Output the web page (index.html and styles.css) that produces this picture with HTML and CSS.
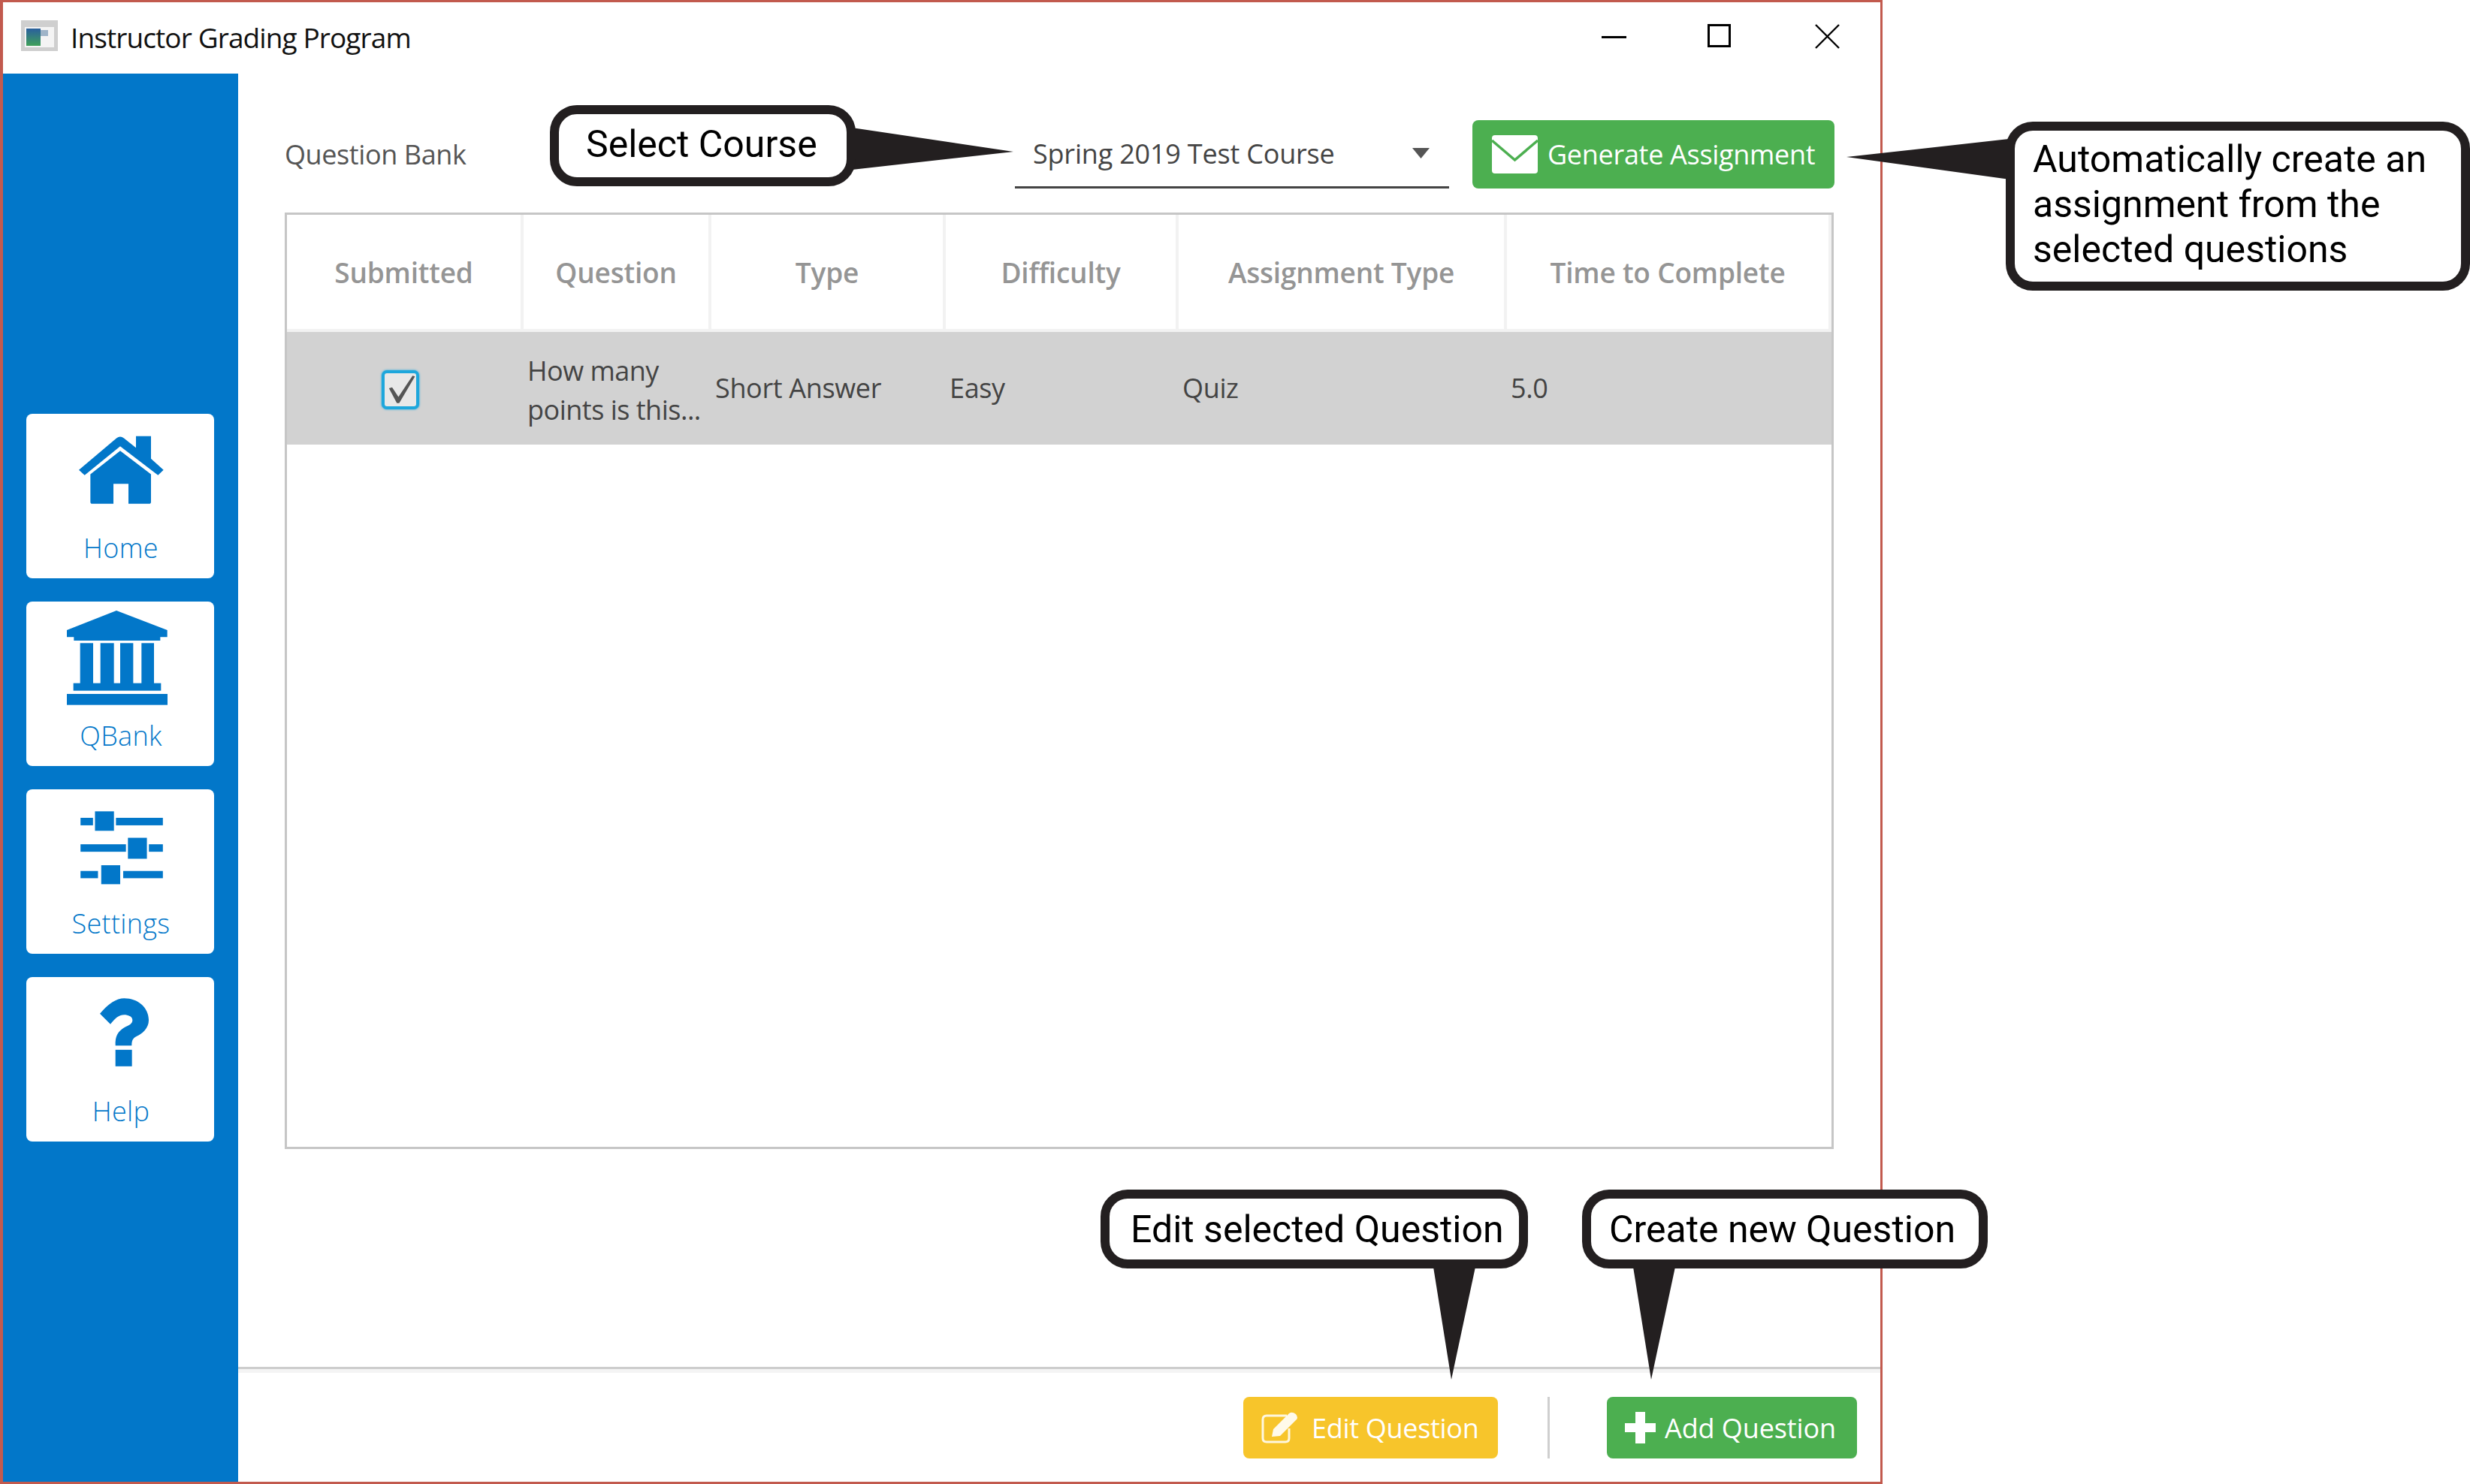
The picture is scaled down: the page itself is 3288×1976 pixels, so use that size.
FILE: index.html
```html
<!DOCTYPE html>
<html lang="en">
<head>
  <meta charset="UTF-8" />
  <title>Instructor Grading Program</title>
  <link rel="stylesheet" href="styles.css">
</head>
<body>
  <div class="window">
    <div class="titlebar">
      <svg class="app-icon" viewBox="0 0 49 41">
        <defs>
          <linearGradient id="appfill" x1="0" y1="0" x2="0" y2="1">
            <stop offset="0" stop-color="#2a5f9e" />
            <stop offset="1" stop-color="#3fa05a" />
          </linearGradient>
        </defs>
        <rect width="49" height="41" fill="#cfcfcf" />
        <rect x="5" y="9" width="39" height="27" fill="#f4f4f4" />
        <rect x="7" y="11" width="19" height="23" fill="url(#appfill)" />
        <rect x="26" y="13" width="10" height="8" fill="#9fb4c8" />
      </svg>
      <span class="app-title">Instructor Grading Program</span>
      <div class="win-controls">
        <svg class="win-btn win-min" viewBox="0 0 33 33"><rect y="16" width="33" height="3" fill="#000" /></svg>
        <svg class="win-btn" viewBox="0 0 33 33"><rect x="1.5" y="1.5" width="28" height="28" fill="none" stroke="#000" stroke-width="3" /></svg>
        <svg class="win-btn" viewBox="0 0 33 33"><path d="M1 1 L32 32 M32 1 L1 32" fill="none" stroke="#000" stroke-width="2.4" /></svg>
      </div>
    </div>

    <div class="app-body">
      <nav class="sidebar">
        <a class="nav-card">
          <svg class="nav-icon icon-home" viewBox="303 148 348 272">
            <path d="M312 285 L462 158 Q477 146 492 158 L540 196 L540 150 L600 150 L600 240 L650 285 L628 306 L477 190 L335 306 Z" />
            <path d="M358 302 L477 208 L600 302 L600 412 Q600 420 592 420 L510 420 L510 340 L450 340 L450 420 L366 420 Q358 420 358 412 Z" />
          </svg>
          <span class="nav-label">Home</span>
        </a>
        <a class="nav-card">
          <svg class="nav-icon icon-bank" viewBox="267 850 402 378">
            <path d="M267 928 L465 850 L668 928 L668 956 L640 956 L640 970 L295 970 L295 956 L267 956 Z" />
            <rect x="320" y="980" width="52" height="165" />
            <rect x="401" y="980" width="54" height="165" />
            <rect x="480" y="980" width="52" height="165" />
            <rect x="565" y="980" width="50" height="165" />
            <rect x="293" y="1140" width="350" height="30" />
            <rect x="267" y="1183" width="402" height="44" />
          </svg>
          <span class="nav-label">QBank</span>
        </a>
        <a class="nav-card">
          <svg class="nav-icon icon-sliders" viewBox="320 148 330 298">
            <rect x="320" y="178" width="50" height="30" />
            <rect x="378" y="152" width="76" height="78" />
            <rect x="462" y="178" width="188" height="30" />
            <rect x="320" y="284" width="182" height="30" />
            <rect x="510" y="258" width="76" height="84" />
            <rect x="594" y="284" width="56" height="30" />
            <rect x="320" y="391" width="70" height="29" />
            <rect x="403" y="368" width="76" height="76" />
            <rect x="491" y="391" width="159" height="29" />
          </svg>
          <span class="nav-label">Settings</span>
        </a>
        <a class="nav-card">
          <svg class="nav-icon icon-help" viewBox="398 898 195 272">
            <path d="M398 960 C430 920 465 898 495 898 C550 898 593 935 593 985 C593 1020 565 1040 545 1050 C530 1058 525 1065 525 1087 L460 1087 C458 1050 470 1030 495 1015 C515 1005 528 1000 528 985 C528 970 510 964 495 964 C475 964 460 975 440 1002 Z" />
            <rect x="460" y="1104" width="66" height="66" />
          </svg>
          <span class="nav-label">Help</span>
        </a>
      </nav>

      <main class="main">
        <div class="content">
          <div class="toolbar">
            <span class="toolbar-label">Question Bank</span>
            <div class="course-select">
              <span>Spring 2019 Test Course</span>
              <svg class="select-arrow" viewBox="0 0 23 14"><path d="M0 0 H23 L11.5 14 Z" /></svg>
            </div>
            <button class="btn btn-generate">
              <svg class="btn-icon-mail" viewBox="0 0 61 51">
                <rect width="61" height="51" rx="4" fill="#fff" />
                <path d="M0 7 L30.5 33 L61 7" fill="none" stroke="#4caf50" stroke-width="3.5" />
              </svg>
              Generate Assignment
            </button>
          </div>

          <div class="table-box">
            <table class="questions">
              <colgroup>
                <col class="col-a"><col class="col-b"><col class="col-c"><col class="col-d"><col class="col-e"><col class="col-f">
              </colgroup>
              <thead>
                <tr>
                  <th>Submitted</th>
                  <th>Question</th>
                  <th>Type</th>
                  <th>Difficulty</th>
                  <th>Assignment Type</th>
                  <th>Time to Complete</th>
                </tr>
              </thead>
              <tbody>
                <tr class="selected">
                  <td class="cell-check">
                    <span class="checkbox">
                      <svg viewBox="0 0 39 42"><path d="M5 19 L9 18 L17 30 L35 3 L38 4 L18 38 L15 38 Z" fill="#555" /></svg>
                    </span>
                  </td>
                  <td class="cell-wrap">How many<br>points is this...</td>
                  <td>Short Answer</td>
                  <td>Easy</td>
                  <td>Quiz</td>
                  <td>5.0</td>
                </tr>
              </tbody>
            </table>
          </div>
        </div>

        <div class="footer">
          <button class="btn btn-edit">
            <svg class="btn-icon-edit" viewBox="0 0 52 42">
              <path d="M34 5 H7 Q2 5 2 10 V35 Q2 40 7 40 H32 Q37 40 37 35 V22" fill="none" stroke="#fff" stroke-opacity=".85" stroke-width="3" />
              <path d="M14 33 L16 23 L37 2 Q41 -1 46 3 Q50 8 46 11 L25 32 Z" fill="#fff" fill-opacity=".9" />
            </svg>
            Edit Question
          </button>
          <span class="footer-sep"></span>
          <button class="btn btn-add">
            <svg class="btn-icon-plus" viewBox="0 0 41 42"><path d="M14 0 H27 V15 H41 V27 H27 V42 H14 V27 H0 V15 H14 Z" fill="#fff" /></svg>
            Add Question
          </button>
        </div>
      </main>
    </div>
  </div>

  <!-- callouts drawn over the screenshot -->
  <svg class="tail tail-course" viewBox="0 0 215 60"><path d="M0 0 L215 32 L0 56 Z" /></svg>
  <div class="callout callout-course">Select Course</div>

  <svg class="tail tail-assign" viewBox="0 0 225 60"><path d="M225 0 L0 25 L225 56 Z" /></svg>
  <div class="callout callout-assign">Automatically create an<br>assignment from the<br>selected questions</div>

  <svg class="tail tail-edit" viewBox="0 0 56 150"><path d="M0 0 H56 L24 150 Z" /></svg>
  <div class="callout callout-edit">Edit selected Question</div>

  <svg class="tail tail-add" viewBox="0 0 56 150"><path d="M0 0 H56 L24 150 Z" /></svg>
  <div class="callout callout-add">Create new Question</div>
</body>
</html>
```

FILE: styles.css
```css
* {
  box-sizing: border-box;
}

html, body {
  margin: 0;
  height: 100%;
}

body {
  position: relative;
  width: 3288px;
  height: 1976px;
  overflow: hidden;
  background-color: #fff;
  font-family: "Open Sans", "Noto Sans", sans-serif;
  color: #444;
}

/* Window */
.window {
  width: 2506px;
  height: 1976px;
  border: 3px solid #c25a4e;
  border-left-width: 4px;
  display: flex;
  flex-direction: column;
  background-color: #fff;
}

.titlebar {
  height: 95px;
  flex: none;
  display: flex;
  align-items: flex-start;
  padding-left: 24px;
}

.app-icon {
  width: 49px;
  height: 41px;
  margin-top: 24px;
}

.app-title {
  margin-left: 17px;
  margin-top: 24px;
  font-size: 37px;
  line-height: 46px;
  letter-spacing: -0.9px;
  color: #111;
}

.win-controls {
  margin-left: auto;
  margin-top: 29px;
  margin-right: 54px;
  display: flex;
  gap: 110px;
}

.win-btn {
  width: 33px;
  height: 33px;
}

.win-min {
  margin-right: -2px;
}

.app-body {
  flex: 1;
  display: flex;
  min-height: 0;
}

/* Sidebar */
.sidebar {
  width: 313px;
  flex: none;
  background-color: #0277c9;
  padding: 453px 0 0 31px;
  display: flex;
  flex-direction: column;
  gap: 31px;
}

.nav-card {
  width: 250px;
  height: 219px;
  background-color: #fff;
  border-radius: 8px;
  display: flex;
  flex-direction: column;
  align-items: center;
  color: #0277c9;
}

.nav-icon {
  fill: #0277c9;
  display: block;
}

.icon-home {
  width: 116px;
  height: 91px;
  margin-top: 29px;
}

.icon-bank {
  width: 134px;
  height: 126px;
  margin-top: 12px;
  margin-left: -8px;
}

.icon-sliders {
  width: 110px;
  height: 99px;
  margin-top: 28px;
  margin-left: 4px;
}

.icon-help {
  width: 65px;
  height: 91px;
  margin-top: 28px;
  margin-left: 10px;
}

.nav-label {
  margin-top: auto;
  margin-bottom: 16px;
  font-size: 36px;
  font-weight: 300;
  line-height: 48px;
  letter-spacing: 0.3px;
  padding-left: 2px;
}

/* Main area */
.main {
  flex: 1;
  min-width: 0;
  display: flex;
  flex-direction: column;
}

.content {
  flex: 1;
  padding: 62px 62px 0;
}

.toolbar {
  height: 91px;
  display: flex;
  align-items: stretch;
  gap: 31px;
}

.toolbar-label {
  align-self: center;
  margin-right: auto;
  font-size: 36px;
  letter-spacing: -0.4px;
  color: #555;
}

.course-select {
  width: 578px;
  border-bottom: 3px solid #444;
  padding: 0 26px 0 24px;
  display: flex;
  align-items: center;
  justify-content: space-between;
  font-size: 36px;
  letter-spacing: -0.2px;
  color: #444;
}

.select-arrow {
  width: 23px;
  height: 14px;
  fill: #555;
}

.btn {
  border: none;
  border-radius: 8px;
  color: #fff;
  font-family: inherit;
  font-size: 36px;
  letter-spacing: -0.3px;
  display: flex;
  align-items: center;
  padding: 0;
}

.btn-generate {
  flex: none;
  width: 482px;
  margin-right: -1px;
  background-color: #4caf50;
  padding-left: 26px;
  gap: 13px;
}

.btn-icon-mail {
  width: 61px;
  height: 51px;
}

/* Table */
.table-box {
  margin-top: 32px;
  height: 1247px;
  border: 3px solid #c6c6c6;
  background-color: #fff;
}

.questions {
  width: 100%;
  table-layout: fixed;
  border-collapse: separate;
  border-spacing: 0;
}

.col-a { width: 315px; }
.col-b { width: 250px; }
.col-c { width: 312px; }
.col-d { width: 310px; }
.col-e { width: 437px; }
.col-f { width: 432px; }

.questions th {
  height: 156px;
  padding: 0;
  font-size: 37px;
  font-weight: 600;
  letter-spacing: -0.2px;
  color: #959595;
  background-color: #fff;
  border-right: 4px solid #f2f2f2;
  border-bottom: 4px solid #f2f2f2;
}

.questions td {
  height: 150px;
  padding: 0 0 0 5px;
  font-size: 36px;
  line-height: 52px;
  letter-spacing: -0.35px;
  color: #444;
  white-space: nowrap;
}

.selected {
  background-color: #d2d2d2;
}

.questions .cell-wrap {
  padding-top: 6px;
  letter-spacing: -0.5px;
}

.questions .cell-check {
  text-align: center;
  padding: 0 14px 0 0;
}

.checkbox {
  display: inline-block;
  width: 50px;
  height: 52px;
  border: 4px solid #1ea7dc;
  border-radius: 7px;
  box-shadow: 0 0 3px #1ea7dc;
  background-color: #e8e8e8;
  vertical-align: middle;
}

.checkbox svg {
  display: block;
  width: 100%;
  height: 100%;
}

/* Footer */
.footer {
  height: 153px;
  flex: none;
  border-top: 3px solid #cdcdcd;
  box-shadow: inset 0 5px 0 #f4f4f4;
  padding: 37px 31px 0 0;
  display: flex;
  justify-content: flex-end;
  align-items: flex-start;
}

.footer .btn {
  height: 82px;
}

.btn-edit {
  width: 339px;
  background-color: #f7c52b;
  padding-left: 24px;
  gap: 15px;
}

.btn-icon-edit {
  width: 52px;
  height: 42px;
}

.footer-sep {
  width: 3px;
  height: 82px;
  margin: 0 76px 0 66px;
  background-color: #cfcfcf;
}

.btn-add {
  width: 333px;
  background-color: #4caf50;
  padding-left: 24px;
  gap: 12px;
  letter-spacing: -0.1px;
}

.btn-icon-plus {
  width: 41px;
  height: 42px;
}

/* Callouts */
.callout {
  position: absolute;
  background-color: #fff;
  border: 12px solid #231f20;
  border-radius: 36px;
  font-family: Roboto, "Liberation Sans", sans-serif;
  font-size: 50px;
  color: #000;
  white-space: nowrap;
}

.tail {
  position: absolute;
  fill: #231f20;
}

.callout-course {
  left: 732px;
  top: 140px;
  width: 407px;
  height: 108px;
  padding: 0 0 0 36px;
  line-height: 80px;
}

.tail-course {
  left: 1134px;
  top: 170px;
  width: 215px;
  height: 60px;
}

.callout-assign {
  left: 2670px;
  top: 162px;
  width: 618px;
  height: 225px;
  padding: 8px 0 0 24px;
  line-height: 60px;
}

.tail-assign {
  left: 2458px;
  top: 184px;
  width: 225px;
  height: 60px;
}

.callout-edit {
  left: 1465px;
  top: 1584px;
  width: 569px;
  height: 105px;
  padding-left: 28px;
  line-height: 82px;
}

.tail-edit {
  left: 1908px;
  top: 1687px;
  width: 56px;
  height: 150px;
}

.callout-add {
  left: 2106px;
  top: 1584px;
  width: 540px;
  height: 105px;
  padding-left: 24px;
  line-height: 82px;
}

.tail-add {
  left: 2174px;
  top: 1687px;
  width: 56px;
  height: 150px;
}
```
